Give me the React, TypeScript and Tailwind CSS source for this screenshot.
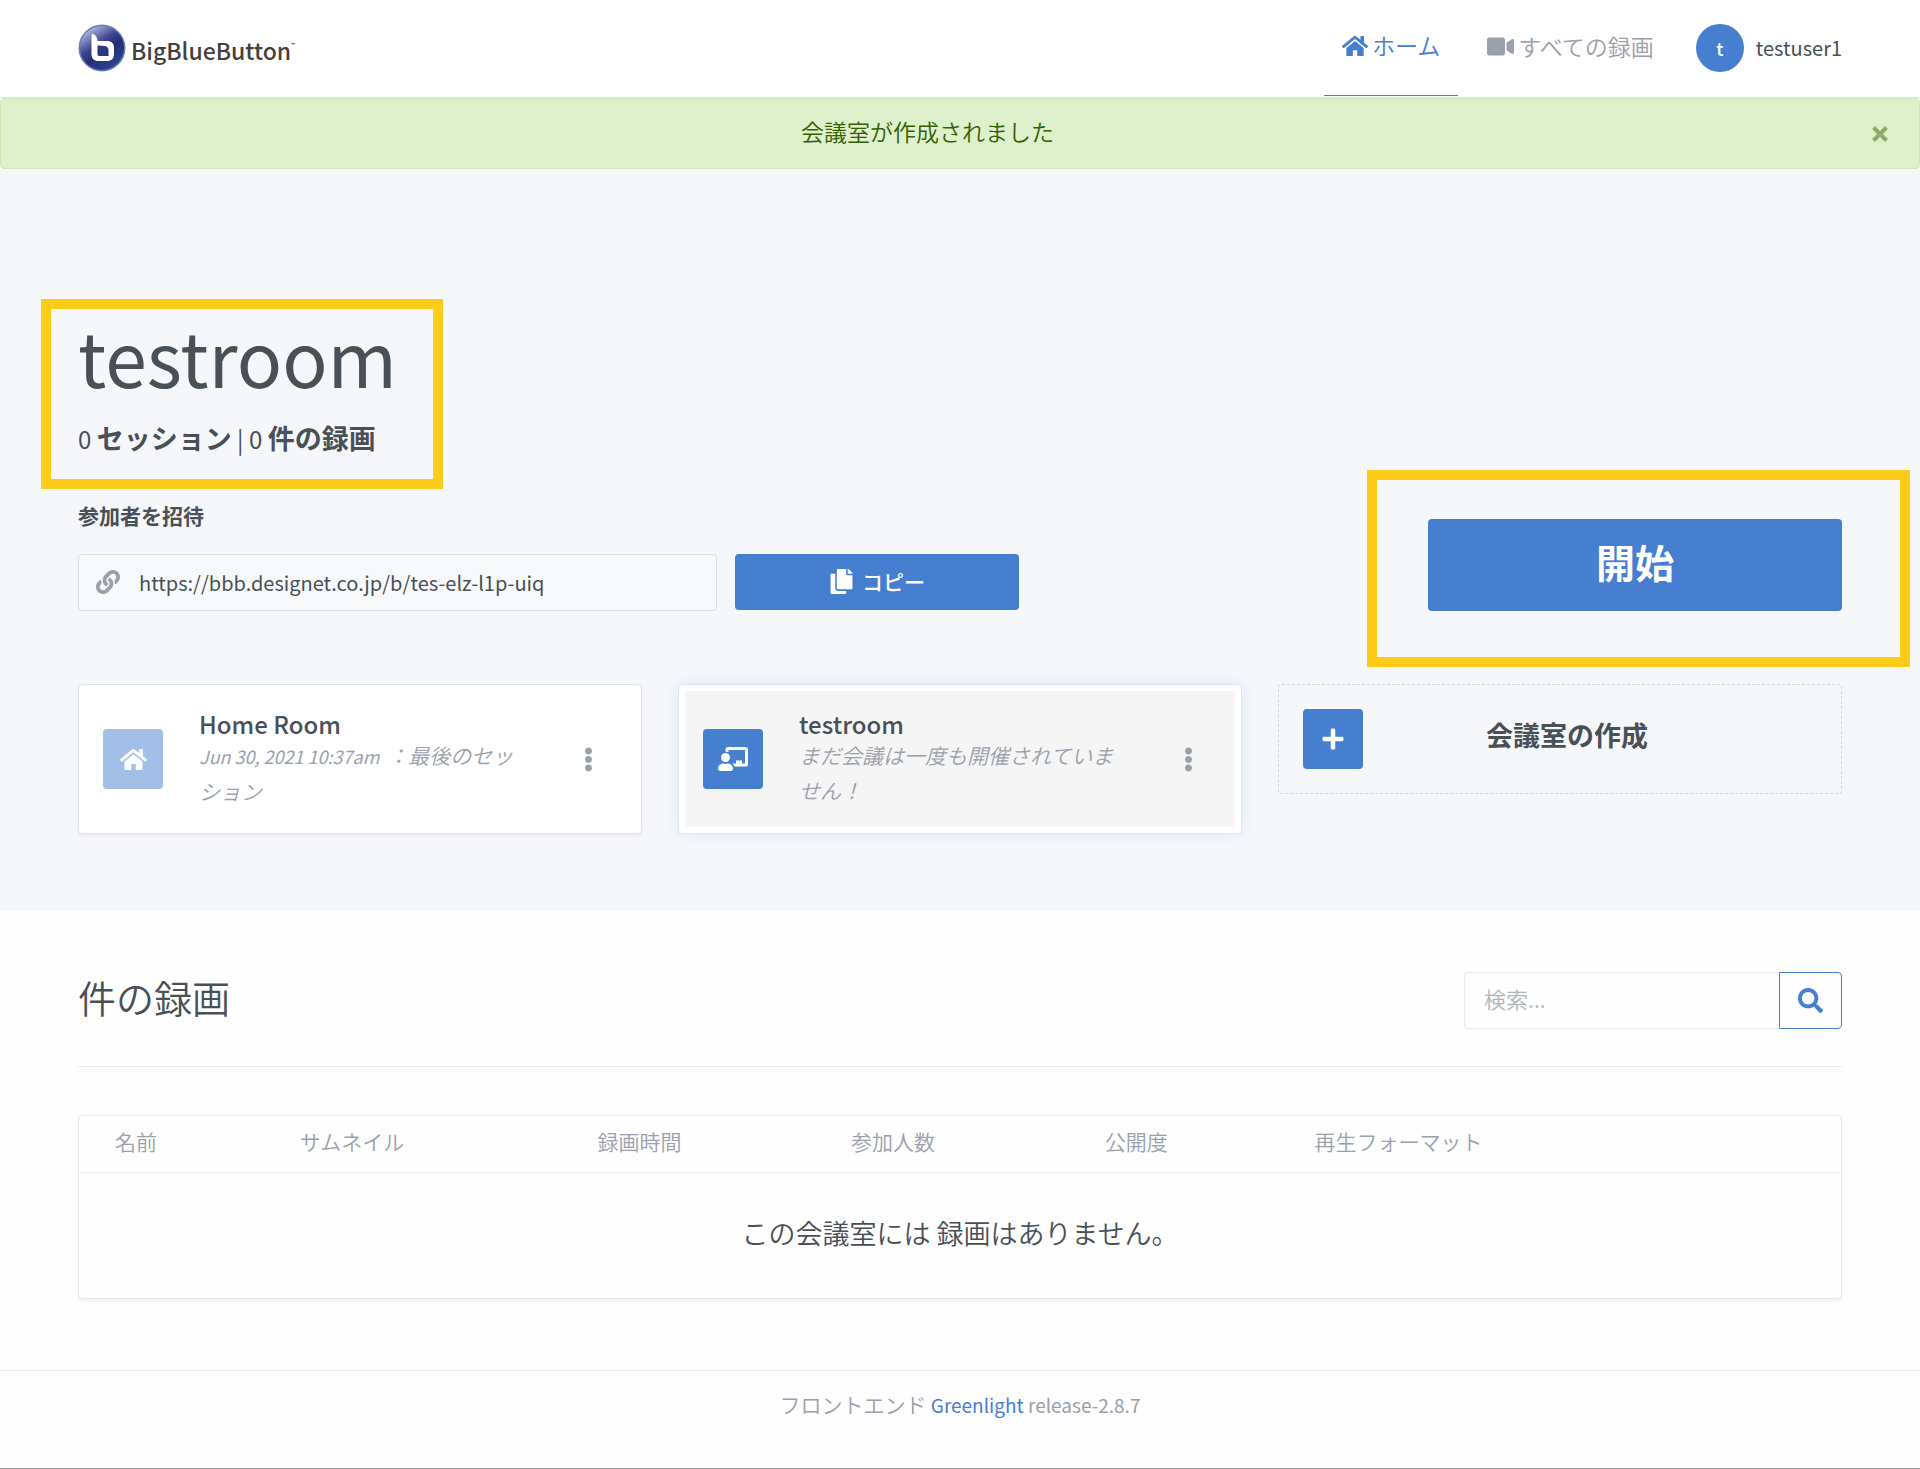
import type { ReactNode } from "react";
import {
  FaChalkboardTeacher,
  FaCopy,
  FaEllipsisV,
  FaHome,
  FaLink,
  FaPlus,
  FaSearch,
  FaVideo,
} from "react-icons/fa";

function Logo() {
  return (
    <a href="#" className="flex items-center gap-[5px]" aria-label="BigBlueButton">
      <svg viewBox="0 0 48 48" className="size-12" aria-hidden="true">
        <defs>
          <linearGradient id="ball" x1="0.1" y1="0.1" x2="0.7" y2="1">
            <stop offset="0" stopColor="#b9bfdf" />
            <stop offset="0.4" stopColor="#3b4490" />
            <stop offset="0.6" stopColor="#252d72" />
            <stop offset="1" stopColor="#2a4596" />
          </linearGradient>
        </defs>
        <circle cx="24" cy="24" r="23.5" fill="#6f7cba" />
        <circle cx="24" cy="24" r="22" fill="url(#ball)" />
        <path
          d="M14 9.500c3 1 5.500 3.500 5.500 7.500H29c4.500 0 7 2.500 7 6.500V30c0 4.500-2.500 7-7 7h-8.500c-4.500 0-7-2.500-7-7V12c0-1 .2-1.800.5-2.500z"
          fill="#fff"
        />
        <path d="M19.500 21.500c2.500.200 5 .200 6.500.500 3 .200 4.500 1.500 4.500 4.500v5.500h-8.500c-2 0-2.500-.500-2.500-2.500z" fill="#2b3780" />
      </svg>
      <span className="flex items-start pt-1 font-['Noto_Sans_CJK_JP',sans-serif] text-[23px] leading-8 font-medium text-[#414141]">
        BigBlueButton
        <sup className="top-0 pt-2 text-[5px] leading-none">™</sup>
      </span>
    </a>
  );
}

function Header() {
  return (
    <header className="border-b border-[#dde3ea] bg-white px-[78px]">
      <div className="flex h-24 items-center justify-between">
        <Logo />
        <nav className="flex h-full items-center text-[#9aa0ac]">
          <a
            href="#"
            className="flex h-24 items-center gap-1 border-b border-[#467fcf] px-[18px] pb-1 text-[23px] font-[350] text-[#467fcf]"
          >
            <FaHome className="size-[26px]" />
            ホーム
          </a>
          <a href="#" className="ml-[11px] flex h-24 items-center gap-1 px-[18px] pb-1 text-[23px] font-[350]">
            <FaVideo className="size-[27px]" />
            すべての録画
          </a>
          <button type="button" className="ml-6 flex items-center gap-3 text-[20px] text-[#495057]">
            <span className="flex size-12 items-center justify-center rounded-full bg-[#467fcf] text-[18px] font-medium text-white">
              t
            </span>
            testuser1
          </button>
        </nav>
      </div>
      <div className="h-px" />
    </header>
  );
}

function Alert() {
  return (
    <div
      role="alert"
      className="relative flex h-[71px] items-center justify-center rounded-[4px] border border-[#cfeab4] bg-[#dff0cc] pr-[66px] pb-1 pl-px text-[23px] font-[350] text-[#316100]"
    >
      会議室が作成されました
      <button
        type="button"
        aria-label="閉じる"
        className="absolute top-1/2 right-[31px] flex size-4 -translate-y-1/2 items-center justify-center text-[#8bac66]"
      >
        <svg viewBox="0 0 16 16" className="size-4" stroke="currentColor" strokeWidth="4" aria-hidden="true">
          <path d="M1.500 1.500l13 13M14.500 1.500l-13 13" />
        </svg>
      </button>
    </div>
  );
}

function RoomCard({
  icon,
  iconClass,
  title,
  children,
  active = false,
}: {
  icon: ReactNode;
  iconClass: string;
  title: string;
  children: ReactNode;
  active?: boolean;
}) {
  return (
    <article
      className={
        active
          ? "rounded-[4px] border border-[#dfe5ef] bg-white p-[6px] shadow-[0_0_14px_rgba(70,127,207,0.12)]"
          : "rounded-[4px] border border-[#dfe3ea] bg-white p-[6px] shadow-[0_2px_3px_rgba(0,0,0,0.05)]"
      }
    >
      <div className={active ? "flex h-[136px] items-center bg-[#f5f5f5] pl-[18px]" : "flex h-[136px] items-center pl-[18px]"}>
        <span className={iconClass}>{icon}</span>
        <div className="ml-9 min-w-0 flex-1">
          <h4 className="text-[24px] leading-7 font-medium">{title}</h4>
          <p className="pr-[18px] text-[21px] leading-[35px] font-[350] text-[#9aa0ac] italic">{children}</p>
        </div>
        <div className="flex w-[94px] justify-center">
          <button type="button" aria-label="メニュー" className="text-[#9aa0ac]">
            <FaEllipsisV className="size-[25px]" />
          </button>
        </div>
      </div>
    </article>
  );
}

function Hero() {
  return (
    <main className="bg-[#f5f7fb] px-[78px] pt-[143px] pb-[77px]">
      <div className="flex items-end justify-between">
        <div className="flex-1">
          <div className="relative w-fit">
            <h1 className="text-[75px] leading-[88px]">testroom</h1>
            <p className="mt-[18px] text-[24px] leading-10">
              0 <b className="text-[27px]">セッション</b> | 0 <b className="text-[27px]">件の録画</b>
            </p>
            <div className="pointer-events-none absolute -top-[13px] -right-[46px] -bottom-[30px] -left-[37px] border-[10px] border-[#ffcb19]" />
          </div>
          <label htmlFor="invite" className="mt-10 block text-[21px] leading-8 font-bold">
            参加者を招待
          </label>
          <div className="mt-[23px] flex gap-[18px]">
            <div className="relative w-[639px]">
              <FaLink className="absolute top-4 left-[18px] size-6 text-[#9aa0ac]" />
              <input
                id="invite"
                readOnly
                value="https://bbb.designet.co.jp/b/tes-elz-l1p-uiq"
                className="h-[57px] w-full rounded-[4px] border border-[#dae0ea] bg-[#f8f9fa] pl-[60px] text-[20px] outline-none"
              />
            </div>
            <button
              type="button"
              className="flex h-14 w-[284px] items-center justify-center gap-2 rounded-[4px] bg-[#467fcf] pb-px text-[21px] font-medium text-white"
            >
              <FaCopy className="size-[25px]" />
              コピー
            </button>
          </div>
        </div>
        <div className="relative">
          <button
            type="button"
            className="flex h-[92px] w-[414px] items-center justify-center rounded-[4px] bg-[#467fcf] pb-2 text-[39px] font-bold text-white"
          >
            開始
          </button>
          <div className="pointer-events-none absolute -top-[49px] -right-[68px] -bottom-[56px] -left-[61px] border-[10px] border-[#ffcb19]" />
        </div>
      </div>

      <section className="mt-[73px] grid grid-cols-3 items-start gap-9">
        <RoomCard
          title="Home Room"
          icon={<FaHome className="size-[27px]" />}
          iconClass="flex size-[60px] items-center justify-center rounded-[4px] bg-[#a2bfe7] text-white"
        >
          <span className="pr-1 text-[18px] font-normal">Jun 30, 2021 10:37am </span>：最後のセッション
        </RoomCard>
        <RoomCard
          active
          title="testroom"
          icon={<FaChalkboardTeacher className="size-[30px]" />}
          iconClass="flex size-[60px] items-center justify-center rounded-[4px] bg-[#467fcf] text-white"
        >
          まだ会議は一度も開催されていません！
        </RoomCard>
        <button
          type="button"
          className="flex items-center rounded-[4px] border border-dashed border-[#d3d6db] py-6 pr-[106px] pl-6"
        >
          <span className="flex size-[60px] items-center justify-center rounded-[4px] bg-[#467fcf] text-white">
            <FaPlus className="size-6" />
          </span>
          <span className="ml-9 flex-1 pb-2 text-[27px] font-bold">会議室の作成</span>
        </button>
      </section>
    </main>
  );
}

const columns = [
  { label: "名前", className: "w-[11.500%] pl-9" },
  { label: "サムネイル", className: "w-[16.900%] pl-[18px]" },
  { label: "録画時間", className: "w-[14.400%] pl-[18px]" },
  { label: "参加人数", className: "w-[14.400%] pl-[18px]" },
  { label: "公開度", className: "w-[11.900%] pl-[18px]" },
  { label: "再生フォーマット", className: "pl-[18px]" },
];

function Recordings() {
  return (
    <section className="px-[78px] pt-[61px] pb-[71px]">
      <div className="flex items-center justify-between border-b border-[#e8ebf1] pb-[37px]">
        <h2 className="pb-2 text-[38px] leading-[48px] font-[350]">件の録画</h2>
        <form className="flex h-[57px]" onSubmit={(e) => e.preventDefault()}>
          <input
            type="search"
            aria-label="検索"
            placeholder="検索..."
            className="w-[315px] rounded-l-[4px] border border-r-0 border-[#e3e7ee] pb-1 pl-[19px] text-[22px] font-[350] outline-none placeholder:text-[#adb5bd]"
          />
          <button
            type="submit"
            aria-label="検索"
            className="flex w-[63px] items-center justify-center rounded-r-[4px] border border-[#467fcf] text-[#467fcf]"
          >
            <FaSearch className="size-[25px]" />
          </button>
        </form>
      </div>

      <div className="mt-12 rounded-[4px] border border-[#e3e7ee] shadow-[0_2px_3px_rgba(0,0,0,0.05)]">
        <table className="w-full table-fixed border-collapse">
          <thead>
            <tr className="h-14 border-b border-[#e3e7ee] text-left text-[21px] text-[#9aa0ac]">
              {columns.map((c) => (
                <th key={c.label} scope="col" className={`pb-1 font-[350] ${c.className}`}>
                  {c.label}
                </th>
              ))}
            </tr>
          </thead>
          <tbody>
            <tr className="h-[126px]">
              <td colSpan={6} className="pb-1 text-center text-[27px] font-[350]">
                この会議室には 録画はありません。
              </td>
            </tr>
          </tbody>
        </table>
      </div>
    </section>
  );
}

export default function App() {
  return (
    <div className="bg-[#fefefe] font-['Noto_Sans_CJK_JP',sans-serif] text-[#495057]" lang="ja">
      <Header />
      <Alert />
      <Hero />
      <Recordings />
      <footer className="border-t border-[#e3e7ee] pt-[17px] pb-[47px] text-center text-[19px] leading-8 text-[#9aa0ac]">
        <span className="text-[21px] font-[350]">フロントエンド</span>{" "}
        <a href="#" className="text-[#467fcf]">
          Greenlight
        </a>{" "}
        release-2.8.7
      </footer>
      <div className="h-px bg-[#999]" />
    </div>
  );
}
